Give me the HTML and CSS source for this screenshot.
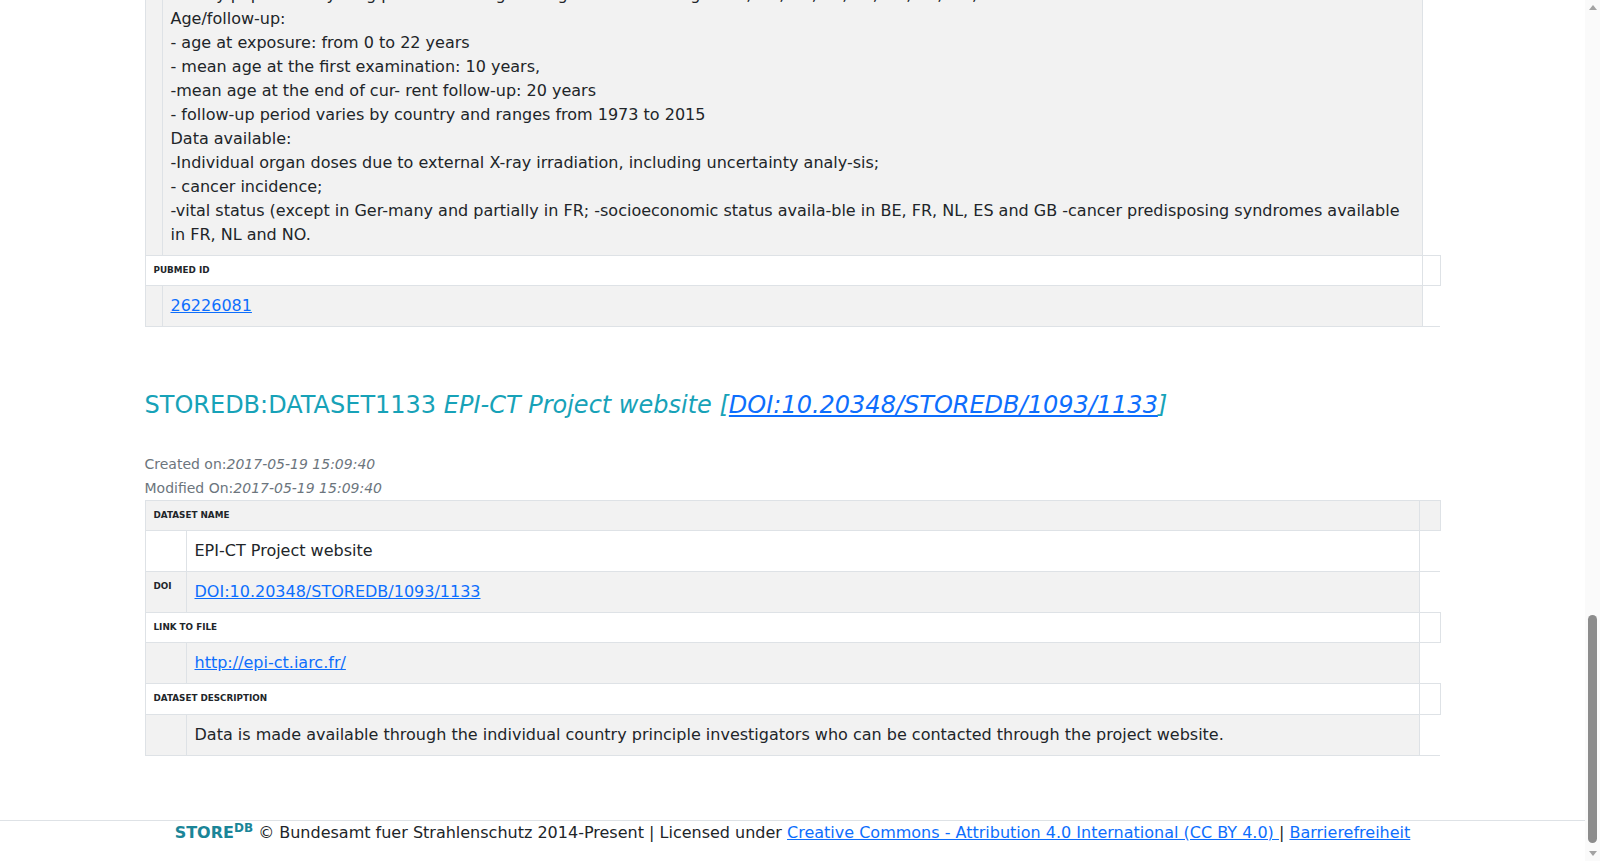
FILE: index.html
```html
<!DOCTYPE html>
<html lang="en">
<head>
  <meta charset="UTF-8" />
  <meta name="viewport" content="width=device-width, initial-scale=1.0" />
  <title>STOREDB • STUDY1093 EPI-CT</title>
  <link rel="stylesheet" href="styles.css">
</head>
<body>
  <main class="container page">
    <section class="entry">
      <table class="info study">
        <colgroup><col class="c1"><col><col class="c3"></colgroup>
        <tbody>
        <tr><td></td><td>
          - study population: young patients having undergone CT scanning in BE, DK, DE, ES, FR, GB, NL, NO, SE<br>
          Age/follow-up:<br>
          - age at exposure: from 0 to 22 years<br>
          - mean age at the first examination: 10 years,<br>
          -mean age at the end of cur- rent follow-up: 20 years<br>
          - follow-up period varies by country and ranges from 1973 to 2015<br>
          Data available:<br>
          -Individual organ doses due to external X-ray irradiation, including uncertainty analy-sis;<br>
          - cancer incidence;<br>
          -vital status (except in Ger-many and partially in FR; -socioeconomic status availa-ble in BE, FR, NL, ES and GB -cancer predisposing syndromes available in FR, NL and NO.
        </td><td class="gap"></td></tr>
        <tr><th colspan="2">PubMed ID</th><td class="edge"></td></tr>
        <tr><td></td><td><a href="#">26226081</a></td><td class="gap"></td></tr>
        </tbody>
      </table>
    </section>

    <section class="entry">
      <h4 class="entry-title">STOREDB:DATASET1133 <em>EPI-CT Project website</em> <em>[<a href="#">DOI:10.20348/STOREDB/1093/1133</a>]</em></h4>
      <div class="meta">Created on:<em>2017-05-19 15:09:40</em></div>
      <div class="meta">Modified On:<em>2017-05-19 15:09:40</em></div>
      <table class="info dataset">
        <colgroup><col class="c1"><col><col class="c3"></colgroup>
        <tbody>
        <tr><th colspan="2">Dataset name</th><td class="edge"></td></tr>
        <tr><td></td><td>EPI-CT Project website</td><td class="gap"></td></tr>
        <tr><th>DOI</th><td><a href="#">DOI:10.20348/STOREDB/1093/1133</a></td><td class="gap"></td></tr>
        <tr><th colspan="2">Link to file</th><td class="edge"></td></tr>
        <tr><td></td><td><a href="#">http://epi-ct.iarc.fr/</a></td><td class="gap"></td></tr>
        <tr><th colspan="2">Dataset description</th><td class="edge"></td></tr>
        <tr><td></td><td>Data is made available through the individual country principle investigators who can be contacted through the project website.</td><td class="gap"></td></tr>
        </tbody>
      </table>
    </section>
  </main>

  <footer class="footer">
    <span class="logo">STORE<sup>DB</sup></span> © Bundesamt fuer Strahlenschutz 2014-Present | Licensed under <a href="#">Creative Commons - Attribution 4.0 International (CC BY 4.0) </a>| <a href="#">Barrierefreiheit</a>
  </footer>

  <!-- window scrollbar, drawn -->
  <div class="scrollbar" aria-hidden="true">
    <span class="sb-btn sb-up"></span>
    <span class="sb-track"><span class="sb-thumb"></span></span>
    <span class="sb-btn sb-down"></span>
  </div>

  <script src="script.js"></script>
</body>
</html>
```

FILE: styles.css
```css
*{box-sizing:border-box}
body{margin:0 15px 0 0;font-family:"DejaVu Sans",sans-serif;font-size:16px;line-height:1.5;color:#212529;background:#fff}
a{color:#0d6efd}
sup{line-height:0}
.container{width:1320px;max-width:100%;margin:0 auto;padding:0 12px}

/* entries */
.page{padding-bottom:64px}
.entry+.entry{margin-top:64px}
.entry-title{margin:0 0 32px;font-size:24px;font-weight:400;line-height:1.2;color:#17a2b8}
.entry-title a{color:#0d6efd}
.meta{font-size:14px;line-height:24px;color:#6c757d}

/* key/value tables */
.info{width:100%;border-collapse:collapse;table-layout:fixed}
.info th,.info td{border:1px solid #dee2e6;padding:8px;vertical-align:top;text-align:left}
.info th{font-size:8.8px;line-height:1.5;font-weight:bold;text-transform:uppercase}
.info tbody tr:nth-child(odd)>:not(.gap){background:#f2f2f2}
.info .gap{border-right:0}
.study .c1{width:17px}
.study .c3{width:18px}
.dataset .c1{width:41px}
.dataset .c3{width:21px}

/* footer */
.footer{border-top:1px solid #dee2e6;text-align:center;padding:0 0 16px}
.footer .logo{font-weight:bold;color:#1a8598}
.footer .logo sup{font-size:12px}

/* scrollbar */
.scrollbar{position:fixed;top:0;right:0;width:15px;height:100vh;background:#fafafa;display:flex;flex-direction:column}
.sb-btn{height:15px;display:flex;align-items:center;justify-content:center}
.sb-btn::before{content:"";border-left:4px solid transparent;border-right:4px solid transparent}
.sb-up::before{border-bottom:5px solid #a3a3a3}
.sb-down::before{border-top:5px solid #a3a3a3}
.sb-track{flex:1;display:flex;flex-direction:column;justify-content:flex-end;padding:0 3px 3px}
.sb-thumb{height:228px;border-radius:5px;background:#8c8c8c}
```

FILE: script.js
```js
// open the page scrolled down to the last dataset
const toBottom=()=>window.scrollTo(0,document.documentElement.scrollHeight);
toBottom();
window.addEventListener("load",toBottom);
```
